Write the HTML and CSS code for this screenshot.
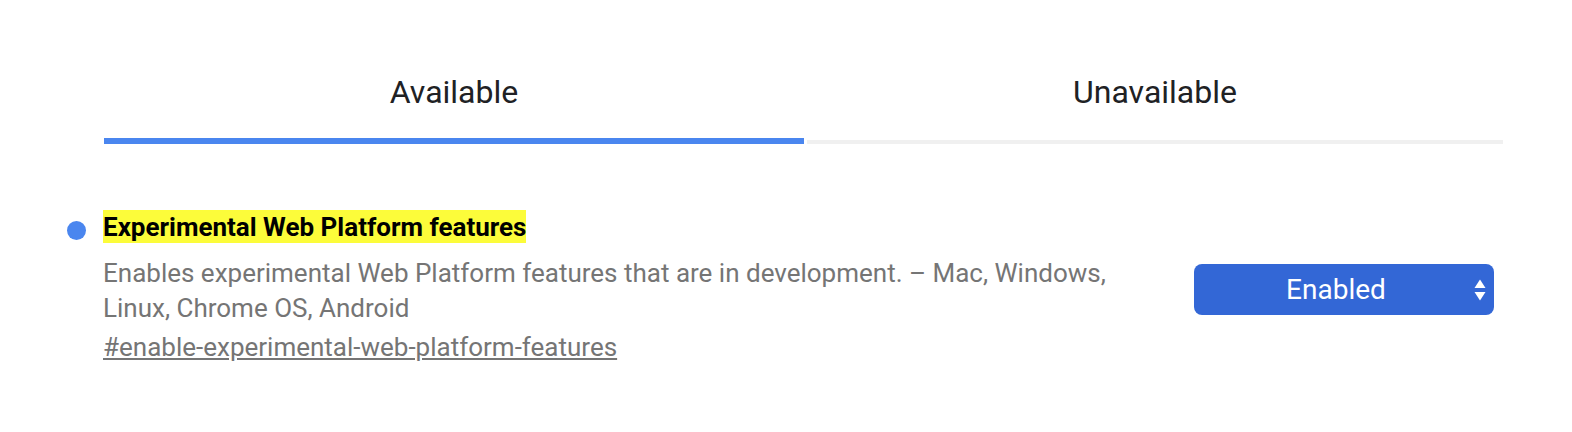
FILE: index.html
```html
<!DOCTYPE html>
<html lang="en">
<head>
  <meta charset="UTF-8" />
  <meta name="viewport" content="width=device-width, initial-scale=1.0" />
  <link rel="stylesheet" href="styles.css">
</head>
<body>
  <div class="tabs">
    <div class="tab selected">Available</div>
    <div class="tab">Unavailable</div>
  </div>

  <div class="experiment">
    <span class="dot"></span>
    <div class="experiment-text">
      <h3 class="experiment-name"><mark>Experimental Web Platform features</mark></h3>
      <p class="description">Enables experimental Web Platform features that are in development. – Mac, Windows, Linux, Chrome OS, Android</p>
      <a class="permalink" href="#enable-experimental-web-platform-features">#enable-experimental-web-platform-features</a>
    </div>
    <div class="actions">
      <div class="select">
        <span>Enabled</span>
        <svg class="arrows" width="12" height="22" viewBox="0 0 12 22">
          <path d="M6 0.5 L11.5 9 H0.5 Z" fill="#fff" />
          <path d="M6 21.5 L11.5 13 H0.5 Z" fill="#fff" />
        </svg>
      </div>
    </div>
  </div>
</body>
</html>
```

FILE: styles.css
```css
:root {
  --blue: #4a86ef;
  --select-blue: #3367d6;
  --text: #202124;
  --muted: #757575;
}
body {
  margin: 0;
  font-family: Roboto, "Liberation Sans", sans-serif;
  background: #ffffff;
  color: var(--text);
}

.tabs {
  display: flex;
  align-items: flex-end;
  gap: 3px;
  margin: 0 69px 0 104px;
  padding-top: 72px;
}
.tab {
  flex: 1;
  text-align: center;
  font-size: 32px;
  line-height: 40px;
  padding-bottom: 28px;
  border-bottom: 4px solid #f0f0f0;
}
.tab.selected {
  flex: 0 0 700px;
  border-bottom: 6px solid var(--blue);
  padding-bottom: 26px;
}

.experiment {
  display: flex;
  align-items: flex-start;
  padding: 66px 78px 0 67px;
}
.dot {
  width: 19px;
  height: 19px;
  margin-top: 11px;
  margin-right: 17px;
  border-radius: 50%;
  background: var(--blue);
  flex-shrink: 0;
}
.experiment-text {
  width: 1020px;
}
.experiment-name {
  margin: 0;
  font-size: 26px;
  font-weight: 700;
  line-height: 34px;
}
.experiment-name mark {
  background: #fcfc3a;
  color: #000;
  padding: 2px 0 1px 0;
}
.description {
  margin: 12px 0 0;
  font-size: 26px;
  line-height: 35px;
  color: var(--muted);
}
.permalink {
  display: inline-block;
  margin-top: 4px;
  font-size: 26px;
  line-height: 35px;
  color: var(--muted);
}

.actions {
  flex: 1;
  display: flex;
  justify-content: flex-end;
  margin-top: 54px;
}
.select {
  position: relative;
  width: 300px;
  height: 51px;
  border-radius: 8px;
  background: var(--select-blue);
  color: #fff;
  font-size: 28px;
  display: flex;
  align-items: center;
  justify-content: center;
}
.select span {
  margin-left: -16px;
}
.arrows {
  position: absolute;
  right: 8px;
  top: 15px;
}
```
